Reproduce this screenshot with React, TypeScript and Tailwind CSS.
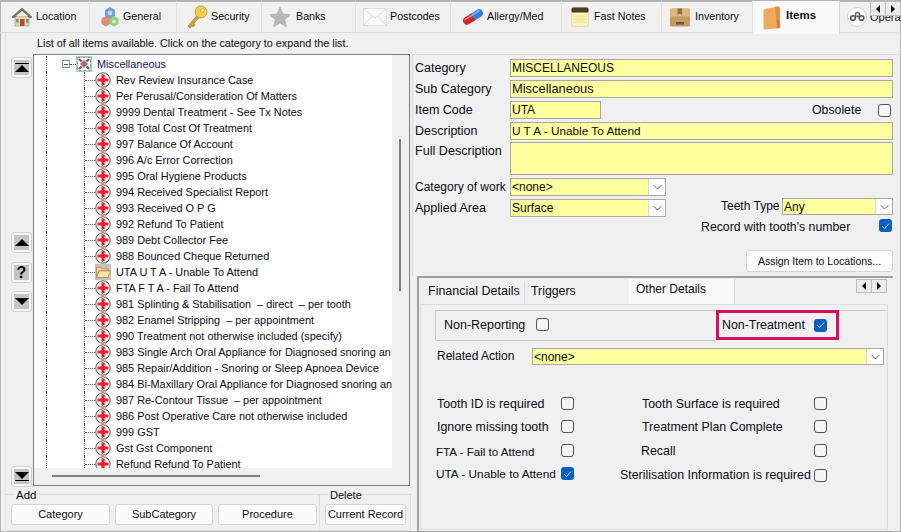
import React from "react";

const treeItems = [
  "Rev Review Insurance Case",
  "Per Perusal/Consideration Of Matters",
  "9999 Dental Treatment - See Tx Notes",
  "998 Total Cost Of Treatment",
  "997 Balance Of Account",
  "996 A/c Error Correction",
  "995 Oral Hygiene Products",
  "994 Received Specialist Report",
  "993 Received O P G",
  "992 Refund To Patient",
  "989 Debt Collector Fee",
  "988 Bounced Cheque Returned",
  "UTA U T A - Unable To Attend",
  "FTA F T A - Fail To Attend",
  "981 Splinting & Stabilisation  – direct  – per tooth",
  "982 Enamel Stripping  – per appointment",
  "990 Treatment not otherwise included (specify)",
  "983 Single Arch Oral Appliance for Diagnosed snoring an",
  "985 Repair/Addition - Snoring or Sleep Apnoea Device",
  "984 Bi-Maxillary Oral Appliance for Diagnosed snoring an",
  "987 Re-Contour Tissue  – per appointment",
  "986 Post Operative Care not otherwise included",
  "999 GST",
  "Gst Gst Component",
  "Refund Refund To Patient",
];

function HouseIcon() {
  return (
    <svg width="22" height="22" viewBox="0 0 22 22">
      <rect x="4" y="10" width="14" height="10" fill="#e3d6bd" stroke="#a08f75" strokeWidth="0.6" />
      <path d="M1 11 L11 2 L21 11 L19 12 L11 5 L3 12 Z" fill="#77736a" stroke="#5a574f" strokeWidth="0.6" />
      <path d="M5 10 L11 5 L17 10 Z" fill="#f2ecdf" />
      <rect x="9" y="13" width="4.5" height="7" fill="#b4521d" />
      <rect x="5" y="13" width="2.5" height="3.5" fill="#7d8c78" />
      <rect x="15" y="13" width="2.5" height="3.5" fill="#7d8c78" />
    </svg>
  );
}

function HexIcon() {
  return (
    <svg width="20" height="22" viewBox="0 0 20 22">
      <path d="M10 1 L15 4 L15 10 L10 13 L5 10 L5 4 Z" fill="#6f9fd0" />
      <path d="M6 10 L10 12.5 L10 18 L6 20.5 L1.5 18 L1.5 12.5 Z" fill="#d98f78" />
      <path d="M14 10 L18.5 12.5 L18.5 18 L14 20.5 L9.5 18 L9.5 12.5 Z" fill="#8fd07c" />
      <circle cx="10" cy="7" r="2.4" fill="#bcd6ee" />
      <circle cx="14" cy="15.5" r="2" fill="#d4f0c8" />
    </svg>
  );
}

function KeyIcon() {
  return (
    <svg width="22" height="24" viewBox="0 0 22 24">
      <path d="M12 9 L2 21 L4 23 L6 21 L7 22 L9 20 L8 18 L15 11 Z" fill="#c9a035" stroke="#94701c" strokeWidth="0.5" />
      <circle cx="15" cy="7" r="6" fill="#f3cf4e" stroke="#b58d22" strokeWidth="0.7" />
      <circle cx="16.5" cy="5.5" r="1.6" fill="#f0f0f0" stroke="#b58d22" strokeWidth="0.5" />
    </svg>
  );
}

function StarIcon() {
  return (
    <svg width="22" height="22" viewBox="0 0 22 22">
      <path d="M11 1 L14 8 L21.5 8.7 L15.8 13.6 L17.6 21 L11 17 L4.4 21 L6.2 13.6 L0.5 8.7 L8 8 Z" fill="#b9b9b9" stroke="#a6a6a6" strokeWidth="0.5" />
    </svg>
  );
}

function EnvelopeIcon() {
  return (
    <svg width="24" height="18" viewBox="0 0 24 18">
      <rect x="0.5" y="0.5" width="23" height="17" fill="#f8f8f8" stroke="#dedede" />
      <path d="M1 1 L12 10 L23 1 M1 17 L9 8 M23 17 L15 8" fill="none" stroke="#dcdcdc" />
    </svg>
  );
}

function PillIcon() {
  return (
    <svg width="22" height="18" viewBox="0 0 22 18">
      <g transform="rotate(-32 11 9)">
        <rect x="0" y="5" width="11" height="8" rx="4" fill="#d9222a" />
        <rect x="11" y="5" width="11" height="8" rx="4" fill="#2a7fd8" />
        <rect x="9" y="5" width="4" height="8" fill="#2a7fd8" />
        <rect x="9" y="5" width="2" height="8" fill="#d9222a" />
        <rect x="2" y="6.2" width="18" height="1.6" rx="0.8" fill="#ffffff" opacity="0.45" />
      </g>
    </svg>
  );
}

function NotesIcon() {
  return (
    <svg width="18" height="20" viewBox="0 0 18 20">
      <rect x="0.5" y="0.5" width="17" height="19" rx="1.5" fill="#faf3b4" stroke="#d6cf9a" strokeWidth="0.6" />
      <rect x="0.5" y="0.5" width="17" height="5" rx="1.5" fill="#4c3b2a" />
      <path d="M2 9 H16 M2 12 H16 M2 15 H16" stroke="#e2da92" strokeWidth="0.7" />
    </svg>
  );
}

function BoxIcon() {
  return (
    <svg width="20" height="19" viewBox="0 0 20 19">
      <rect x="0" y="0.5" width="20" height="18" rx="1.5" fill="#c69a5c" />
      <rect x="0" y="0.5" width="20" height="8" rx="1" fill="#dcb87e" />
      <path d="M7.5 0.5 H12 V7 L9.8 5.5 L7.5 7 Z" fill="#8f6b3b" />
      <rect x="6" y="14" width="8" height="2.5" fill="#5c5a52" />
    </svg>
  );
}

function ItemsFolderIcon() {
  return (
    <svg width="18" height="24" viewBox="0 0 18 24">
      <path d="M2 3 L15 0.5 Q17 0.5 17 2 L17 22 L2 23.5 Q0.5 23.5 0.5 22 L0.5 4.5 Q0.5 3 2 3 Z" fill="#eda95c" />
      <path d="M12 1 L15 0.5 Q17 0.5 17 2 L17 22 L14 22.5 Z" fill="#dc9347" />
      <path d="M14 14 L17 15 L17 21 L14 22 Z" fill="#c98238" />
    </svg>
  );
}

function GearsIcon() {
  return (
    <svg width="20" height="20" viewBox="0 0 20 20">
      <circle cx="10" cy="10" r="9.5" fill="#ffffff" stroke="#d0d0d0" />
      <circle cx="6" cy="11" r="2.3" fill="none" stroke="#555555" strokeWidth="1.6" />
      <circle cx="10.5" cy="7.5" r="2.1" fill="none" stroke="#6a6a6a" strokeWidth="1.5" />
      <circle cx="14.5" cy="11" r="2.3" fill="none" stroke="#555555" strokeWidth="1.6" />
    </svg>
  );
}

function CrossIcon() {
  return (
    <svg width="16" height="16" viewBox="0 0 16 16" className="shrink-0">
      <circle cx="8" cy="8" r="7.2" fill="#ffffff" stroke="#555555" strokeWidth="1" />
      <path d="M6.4 2.6 H9.6 V6.4 H13.4 V9.6 H9.6 V13.4 H6.4 V9.6 H2.6 V6.4 H6.4 Z" fill="#ee1c25" />
    </svg>
  );
}

function FolderOpenIcon() {
  return (
    <div className="w-[16px] h-[16px] bg-[#c0c0c0] flex items-center justify-center shrink-0">
      <svg width="15" height="12" viewBox="0 0 15 12">
        <path d="M0.5 1.5 H5 L6 3 H12 V5 H3 L0.5 11 Z" fill="#f5d795" stroke="#a8823f" strokeWidth="0.7" />
        <path d="M3 5 H14.5 L12 11.5 H0.5 Z" fill="#fbe3ad" stroke="#a8823f" strokeWidth="0.7" />
      </svg>
    </div>
  );
}

function CategoryIcon() {
  return (
    <div className="w-[16px] h-[16px] bg-[#c0c0c0] flex items-center justify-center shrink-0">
      <svg width="14" height="14" viewBox="0 0 14 14">
        <rect x="0.5" y="0.5" width="13" height="13" fill="#ffffff" stroke="#22c8d8" strokeDasharray="3 2" />
        <path d="M7 3 L11 7 L7 11 L3 7 Z" fill="#808080" />
        <path d="M2 2 L4.5 4.5 M12 2 L9.5 4.5 M2 12 L4.5 9.5 M12 12 L9.5 9.5" stroke="#ee1c25" strokeWidth="2" />
      </svg>
    </div>
  );
}

function Tab({ icon, label, w, pl, gap, active }: { icon: React.ReactNode; label: string; w: number; pl: number; gap: number; active?: boolean }) {
  return (
    <div
      className={
        active
          ? "h-[33px] bg-[#f9f9f9] border-r border-[#d9d9d9] flex items-center shrink-0 font-bold text-[11.5px]"
          : "h-[32px] border-r border-[#e3e3e3] flex items-center shrink-0 text-[10.7px]"
      }
      style={{ width: w, gap, paddingLeft: pl }}
    >
      {icon}
      <span className={active ? "-mt-[5px]" : "-mt-[1px]"}>{label}</span>
    </div>
  );
}

function SideButton({ children }: { children: React.ReactNode }) {
  return (
    <div className="w-[21px] h-[21px] rounded-[3px] border border-[#d0d0d0] bg-[#f8f8f8] p-[2px]">
      <div className="w-full h-full bg-[#c4c4c4] flex flex-col items-center justify-center">{children}</div>
    </div>
  );
}

function Up({ bar }: { bar?: boolean }) {
  return (
    <>
      {bar && <div className="w-[14px] h-[1.5px] bg-black mb-[1px]" />}
      <div className="w-0 h-0 border-x-[7px] border-x-transparent border-b-[7px] border-b-black" />
    </>
  );
}

function Down({ bar }: { bar?: boolean }) {
  return (
    <>
      <div className="w-0 h-0 border-x-[7px] border-x-transparent border-t-[7px] border-t-black" />
      {bar && <div className="w-[14px] h-[1.5px] bg-black mt-[1px]" />}
    </>
  );
}

function TreeRow({ label }: { label: string }) {
  const isFolder = label.startsWith("UTA");
  return (
    <div className="h-[16px] flex items-center whitespace-pre pl-[12px]">
      <div className="w-[39px] h-full border-x border-dotted border-[#555] shrink-0" />
      <div className="w-[10px] border-t border-dotted border-[#555] shrink-0" />
      {isFolder ? <FolderOpenIcon /> : <CrossIcon />}
      <span className="ml-[5px]">{label}</span>
    </div>
  );
}

function Field({ value, w, btn, h = "h-[18px]", text = "" }: { value: string; w: string; btn?: boolean; h?: string; text?: string }) {
  return (
    <div className={`${w} ${h} border border-[#a8a8a8] bg-[#ffffa0] flex items-start shrink-0`}>
      <span className={`flex-1 pl-[1px] leading-[16px] whitespace-pre ${text}`}>{value}</span>
      {btn && <DropBtn />}
    </div>
  );
}

function DropBtn() {
  return (
    <div className="w-[17px] h-full bg-white border-l border-[#d8d8d8] flex items-center justify-center">
      <svg width="9" height="6" viewBox="0 0 9 6">
        <path d="M0.5 1 L4.5 5 L8.5 1" fill="none" stroke="#666666" strokeWidth="1" />
      </svg>
    </div>
  );
}

function Check({ on }: { on?: boolean }) {
  return on ? (
    <div className="w-[13px] h-[13px] rounded-[3px] bg-[#0a5fc0] flex items-center justify-center shrink-0">
      <svg width="9" height="8" viewBox="0 0 9 8">
        <path d="M1 4 L3.5 6.5 L8 1.5" fill="none" stroke="#dbe9f8" strokeWidth="1" />
      </svg>
    </div>
  ) : (
    <div className="w-[13px] h-[13px] rounded-[3px] border border-[#555] bg-[#f4f4f4] shrink-0" />
  );
}

function Label({ children, text = "text-[12.5px]" }: { children: React.ReactNode; text?: string }) {
  return <div className={`w-[95px] shrink-0 whitespace-nowrap ${text}`}>{children}</div>;
}

function OptionRow({ left, leftOn, right, rightX, rowH, shift = 0, leftText = "", last }: { left: string; leftOn?: boolean; right: string; rightX: number; rowH: string; shift?: number; leftText?: string; last?: boolean }) {
  return (
    <div className={`${rowH} flex items-start text-[12.4px]`}>
      <div className={`shrink-0 whitespace-nowrap ${leftText}`} style={{ marginLeft: shift, width: 124 - shift }}>{left}</div>
      <Check on={leftOn} />
      <div className={last ? "whitespace-nowrap mt-[1px]" : "whitespace-nowrap"} style={{ marginLeft: rightX - 574, width: 814 - rightX }}>{right}</div>
      <div className={last ? "mt-[2px]" : ""}><Check /></div>
    </div>
  );
}

export default function App() {
  return (
    <div
      className="w-[901px] h-[532px] overflow-hidden bg-[#f0f0f0] text-[12px] leading-[15px] text-[#0c0c14] border-t border-[#b4b4b4] shadow-[inset_0_0_0_1px_#b4b4b4] flex flex-col"
      style={{ fontFamily: '"Liberation Sans", Arial, sans-serif' }}
    >
      <div className="h-[32px] flex shrink-0 border-b border-[#dcdcdc] relative">
        <Tab w={90} pl={11} gap={3} icon={<HouseIcon />} label="Location" />
        <Tab w={87} pl={10} gap={3} icon={<HexIcon />} label="General" />
        <Tab w={85} pl={9} gap={3} icon={<KeyIcon />} label="Security" />
        <Tab w={94} pl={7} gap={5} icon={<StarIcon />} label="Banks" />
        <Tab w={95} pl={7} gap={3} icon={<EnvelopeIcon />} label="Postcodes" />
        <Tab w={111} pl={11} gap={3} icon={<PillIcon />} label="Allergy/Med" />
        <Tab w={100} pl={9} gap={5} icon={<NotesIcon />} label="Fast Notes" />
        <Tab w={91} pl={8} gap={5} icon={<BoxIcon />} label="Inventory" />
        <Tab w={87} pl={10} gap={5} active icon={<ItemsFolderIcon />} label="Items" />
        <div className="flex items-center pl-[7px] gap-[3px] whitespace-nowrap text-[11px]">
          <GearsIcon />
          <span className="pt-[1px]">Operatories</span>
        </div>
        <div className="absolute right-0 top-0 flex">
          <div className="w-[16px] h-[15px] bg-[#ececec] border border-[#bdbdbd] flex items-center justify-center">
            <div className="w-0 h-0 border-y-[4px] border-y-transparent border-r-[4px] border-r-black" />
          </div>
          <div className="w-[15px] h-[15px] bg-[#ececec] border-y border-r border-[#bdbdbd] flex items-center justify-center">
            <div className="w-0 h-0 border-y-[4px] border-y-transparent border-l-[4px] border-l-black" />
          </div>
        </div>
      </div>

      <div className="flex-1 flex min-h-0">
        <div className="w-[412px] shrink-0 flex flex-col ml-[5px] border-l border-[#e2e2e2]">
          <div className="h-[21px] shrink-0 pl-[31px] pt-[3px] whitespace-nowrap text-[10.8px]">
            List of all items available. Click on the category to expand the list.
          </div>
          <div className="h-[432px] shrink-0 flex">
            <div className="w-[27px] pl-[5px] pt-[3px] shrink-0 flex flex-col">
              <SideButton><Up bar /></SideButton>
              <div className="mt-[154px]"><SideButton><Up /></SideButton></div>
              <div className="mt-[9px]">
                <SideButton><span className="font-bold text-[16px] leading-[16px] text-black">?</span></SideButton>
              </div>
              <div className="mt-[8px]"><SideButton><Down /></SideButton></div>
              <div className="mt-auto mb-[-1px]"><SideButton><Down bar /></SideButton></div>
            </div>
            <div className="w-[377px] h-full border border-[#808080] flex flex-col">
              <div className="flex-1 min-h-0 flex">
                <div className="w-[358px] bg-white overflow-hidden text-[10.9px] pt-[1px]">
                  <div className="h-[16px] flex items-center whitespace-pre pl-[12px]">
                    <div className="w-[16px] h-full border-l border-dotted border-[#555] shrink-0" />
                    <div className="w-[8px] h-[8px] bg-white border border-[#8a8a8a] flex items-center justify-center shrink-0">
                      <div className="w-[4px] h-[1px] bg-[#3a5a8a]" />
                    </div>
                    <div className="w-[6px] border-t border-dotted border-[#555] shrink-0" />
                    <CategoryIcon />
                    <span className="ml-[5px] text-[#141450]">Miscellaneous</span>
                  </div>
                  {treeItems.map((t) => (
                    <TreeRow key={t} label={t} />
                  ))}
                </div>
                <div className="flex-1 pt-[84px] pl-[7px]">
                  <div className="w-[2px] h-[152px] bg-[#808080]" />
                </div>
              </div>
              <div className="h-[17px] shrink-0 pl-[18px] pt-[7px]">
                <div className="w-[208px] h-[2px] bg-[#808080]" />
              </div>
            </div>
          </div>
          <div className="flex-1 flex mt-[8px] mb-[1px] text-[11px]">
            <div className="w-[314px] border-t border-r border-b border-[#dcdcdc] flex gap-[5px] pl-[5px] pt-[9px] relative">
              <span className="absolute left-[9px] -top-[7px] bg-[#f0f0f0] px-[1px] text-[11.5px]">Add</span>
              <div className="w-[99px] h-[21px] bg-white/70 border border-[#d4d4d4] rounded-[3px] text-center leading-[19px]">Category</div>
              <div className="w-[98px] h-[21px] bg-white/70 border border-[#d4d4d4] rounded-[3px] text-center leading-[19px]">SubCategory</div>
              <div className="w-[99px] h-[21px] bg-white/70 border border-[#d4d4d4] rounded-[3px] text-center leading-[19px]">Procedure</div>
            </div>
            <div className="w-[91px] border-t border-r border-b border-[#dcdcdc] pl-[5px] pt-[9px] relative">
              <span className="absolute left-[9px] -top-[7px] bg-[#f0f0f0] px-[1px]">Delete</span>
              <div className="w-[81px] h-[21px] bg-white/70 border border-[#d4d4d4] rounded-[3px] text-center leading-[19px] whitespace-nowrap">Current Record</div>
            </div>
          </div>
        </div>

        <div className="w-[484px] -ml-[5px] shrink-0 flex flex-col min-w-0 pt-[21px]">
          <div className="h-[222px] border-l border-t border-[#d8d8d8] pl-[2px] pr-[8px] pt-[4px] shrink-0 w-[489px]">
            <div className="flex items-start h-[18px]">
              <div className="w-[95px] shrink-0 pt-[2px] text-[12.5px]">Category</div>
              <Field value="MISCELLANEOUS" w="w-[383px]" />
            </div>
            <div className="flex items-center h-[18px] mt-[3px]">
              <Label>Sub Category</Label>
              <Field value="Miscellaneous" w="w-[383px]" text="text-[12.9px]" />
            </div>
            <div className="flex items-center h-[18px] mt-[3px]">
              <Label>Item Code</Label>
              <Field value="UTA" w="w-[91px]" />
              <span className="ml-[211px] text-[12.3px]">Obsolete</span>
              <div className="ml-[17px]"><Check /></div>
            </div>
            <div className="flex items-center h-[18px] mt-[3px]">
              <Label>Description</Label>
              <Field value="U T A - Unable To Attend" w="w-[383px]" text="text-[11.8px]" />
            </div>
            <div className="flex items-start h-[33px] mt-[2px]">
              <div className="w-[95px] shrink-0 pt-[2px] text-[12.6px] whitespace-nowrap">Full Description</div>
              <Field value="" w="w-[383px]" h="h-[33px]" />
            </div>
            <div className="flex items-center h-[18px] mt-[3px]">
              <Label text="text-[12px]">Category of work</Label>
              <Field value="<none>" w="w-[156px]" btn />
            </div>
            <div className="flex items-start h-[18px] mt-[3px]">
              <div className="w-[95px] shrink-0 pt-[2px] text-[12.5px]">Applied Area</div>
              <Field value="Surface" w="w-[156px]" btn />
              <span className="ml-[55px] w-[61px]">Teeth Type</span>
              <div className="-mt-[1px]"><Field value="Any" w="w-[111px]" btn h="h-[17px]" /></div>
            </div>
            <div className="flex items-start h-[14px] mt-[2px] pl-[286px]">
              <span className="w-[178px] mt-[1px] text-[12.3px]">Record with tooth's number</span>
              <Check on />
            </div>
            <div className="flex justify-end mt-[17px]">
              <div className="w-[147px] h-[22px] bg-white/80 border border-[#d4d4d4] rounded-[3px] text-center leading-[20px] text-[10.5px]">
                Assign Item to Locations...
              </div>
            </div>
          </div>

          <div className="flex-1 pl-[5px] min-h-0 w-[489px] pr-[8px]">
            <div className="h-full border-t-2 border-l-2 border-b border-[#a0a0a0] pl-[1px] pt-[1px] pr-[5px] relative">
              <div className="absolute right-[6px] top-[1px] flex">
                <div className="w-[16px] h-[14px] bg-[#ececec] border border-[#bdbdbd] flex items-center justify-center">
                  <div className="w-0 h-0 border-y-[4px] border-y-transparent border-r-[4px] border-r-black" />
                </div>
                <div className="w-[15px] h-[14px] bg-[#ececec] border-y border-r border-[#bdbdbd] flex items-center justify-center">
                  <div className="w-0 h-0 border-y-[4px] border-y-transparent border-l-[4px] border-l-black" />
                </div>
              </div>
              <div className="h-[25px] flex items-end">
                <div className="w-[105px] h-[23px] border-r border-[#dcdcdc] pl-[8px] pt-[3px] text-[12.5px]">Financial Details</div>
                <div className="w-[104px] h-[23px] pl-[6px] pt-[3px] text-[12.3px]">Triggers</div>
                <div className="w-[106px] h-[25px] bg-[#f9f9f9] border-r border-[#dcdcdc] pl-[7px] pt-[3px]">Other Details</div>
              </div>
              <div className="h-[226px] w-[468px] border border-[#dcdcdc] pl-[14px] pt-[5px]">
                <div className="h-[30px] border-l border-t border-[#c8c8c8] flex items-center relative">
                  <span className="pl-[8px] w-[100px] text-[12.5px] -mt-[1px]">Non-Reporting</span>
                  <div className="-mt-[2px]"><Check /></div>
                  <div className="absolute left-[280px] -top-[1px] w-[123px] h-[30px] border-[3px] border-[#d6105f] bg-[#f0f0f0] flex items-center pl-[3px] text-[12.4px]">
                    <span className="w-[92px]">Non-Treatment</span>
                    <Check on />
                  </div>
                  <div className="absolute left-0 -bottom-[1px] w-[280px] border-b border-[#c8c8c8]" />
                </div>
                <div className="flex items-center mt-[8px] h-[17px] pl-[2px]">
                  <span className="w-[95px]">Related Action</span>
                  <Field value="<none>" w="w-[352px]" btn h="h-[17px]" />
                </div>
                <div className="mt-[32px] pl-[2px]">
                  <OptionRow left="Tooth ID is required" right="Tooth Surface is required" rightX={642} rowH="h-[23px]" />
                  <OptionRow left="Ignore missing tooth" right="Treatment Plan Complete" rightX={642} rowH="h-[24px]" />
                  <OptionRow left="FTA - Fail to Attend" right="Recall" rightX={641} rowH="h-[23px]" shift={-1} leftText="text-[11.6px]" />
                  <OptionRow left="UTA - Unable to Attend" leftOn right="Sterilisation Information is required" rightX={620} rowH="h-[23px]" shift={-1} leftText="text-[11.8px]" last />
                </div>
              </div>
            </div>
          </div>
        </div>
      </div>
    </div>
  );
}
